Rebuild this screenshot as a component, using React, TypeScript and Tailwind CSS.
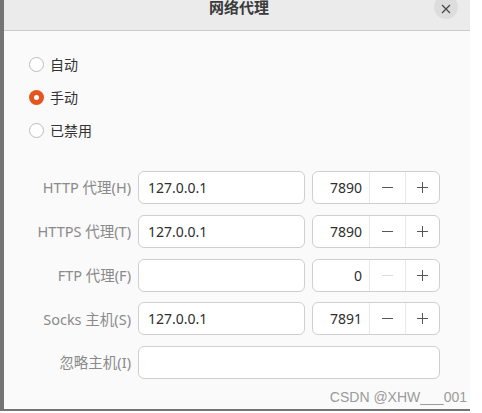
import React from "react";

const font = { fontFamily: '"Noto Sans", "Noto Sans CJK SC", sans-serif' };

function Radio({ checked, label }: { checked?: boolean; label: string }) {
  return (
    <div className="h-[33px] flex items-center gap-[6px]">
      {checked ? (
        <span className="w-[15px] h-[15px] rounded-full bg-[#e5561f] flex items-center justify-center">
          <span className="w-[5px] h-[5px] rounded-full bg-white" />
        </span>
      ) : (
        <span className="w-[15px] h-[15px] rounded-full border border-[#bdbdbd] bg-white" />
      )}
      <span className="text-[14px] text-[#333333] leading-none">{label}</span>
    </div>
  );
}

function Label({ text }: { text: string }) {
  return (
    <div className="flex items-center justify-end text-[14.5px] text-[#8a8a8a] leading-none">{text}</div>
  );
}

function TextInput({ value, wide }: { value?: string; wide?: boolean }) {
  return (
    <div
      className={
        "h-[33px] rounded-[6px] border border-[#cfcfcf] bg-white flex items-center px-[9px] text-[14px] text-[#2e2e2e] " +
        (wide ? "col-span-2" : "")
      }
    >
      {value}
    </div>
  );
}

function Spin({ value, minusDisabled }: { value: string; minusDisabled?: boolean }) {
  return (
    <div className="h-[33px] rounded-[6px] border border-[#cfcfcf] bg-white flex items-stretch text-[14px] text-[#2e2e2e]">
      <div className="w-[56px] flex items-center justify-end pr-[7px]">{value}</div>
      <div className="w-[36px] border-l border-[#e8e8e8] flex items-center justify-center">
        <span className={"block w-[11px] h-[1px] " + (minusDisabled ? "bg-[#dcdcdc]" : "bg-[#555555]")} />
      </div>
      <div className="flex-1 border-l border-[#e8e8e8] flex items-center justify-center">
        <span className="relative block w-[11px] h-[11px]">
          <span className="absolute left-0 top-[5px] w-[11px] h-[1px] bg-[#555555]" />
          <span className="absolute top-0 left-[5px] w-[1px] h-[11px] bg-[#555555]" />
        </span>
      </div>
    </div>
  );
}

export default function App() {
  return (
    <div className="w-[482px] h-[413px] bg-white overflow-hidden" style={font}>
      <div className="w-[470px] h-[411px] border-l-4 border-b-2 border-[#747474] bg-[#fafafa] flex flex-col">
        <div className="relative h-[31px] shrink-0 bg-[#ebebeb] border-b border-[#cbcbcb] flex justify-center items-start">
          <span className="text-[15px] font-bold leading-[16px] text-[#3a3a3a] ml-[4px] mt-[-1px]">网络代理</span>
          <div className="absolute left-[430px] top-[-5px] w-[24px] h-[24px] rounded-full bg-[#dddddd] flex items-center justify-center">
            <svg width="10" height="10" viewBox="0 0 10 10" className="mt-[4px]">
              <path d="M1 1 L9 9 M9 1 L1 9" stroke="#4a4a4a" strokeWidth="1.3" />
            </svg>
          </div>
        </div>
        <div className="flex flex-col pl-[25px] pt-[17px]">
          <Radio label="自动" />
          <Radio checked label="手动" />
          <Radio label="已禁用" />
        </div>
        <div className="grid grid-cols-[127px_167px_128px] gap-x-[7px] gap-y-[10.75px] mt-[24px]">
          <Label text="HTTP 代理(H)" />
          <TextInput value="127.0.0.1" />
          <Spin value="7890" />
          <Label text="HTTPS 代理(T)" />
          <TextInput value="127.0.0.1" />
          <Spin value="7890" />
          <Label text="FTP 代理(F)" />
          <TextInput />
          <Spin value="0" minusDisabled />
          <Label text="Socks 主机(S)" />
          <TextInput value="127.0.0.1" />
          <Spin value="7891" />
          <Label text="忽略主机(I)" />
          <TextInput wide />
        </div>
        <div className="flex justify-end pr-[3px] mt-[11px]">
          <span
            className="text-[14px] text-[#9b9b9b] leading-none"
            style={{ fontFamily: '"Liberation Sans", sans-serif' }}
          >
            CSDN @XHW___001
          </span>
        </div>
      </div>
    </div>
  );
}
